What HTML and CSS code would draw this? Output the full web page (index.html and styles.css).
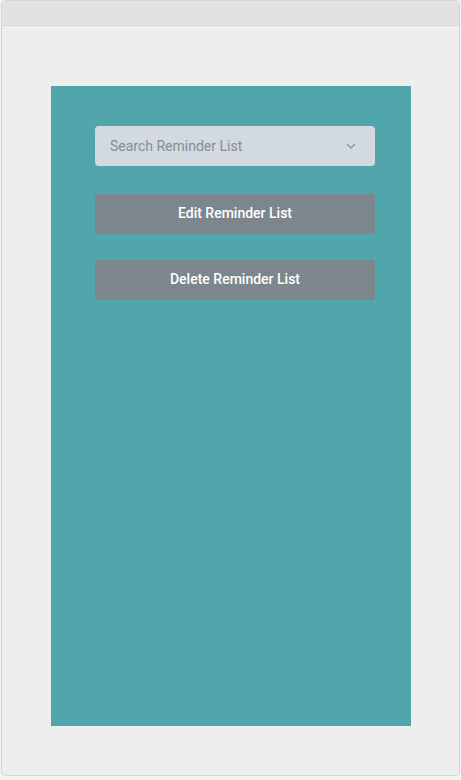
FILE: index.html
```html
<!DOCTYPE html>
<html>
<head>
<meta charset="utf-8">
<link rel="stylesheet" href="styles.css">
</head>
<body>
<div class="frame">
  <div class="topbar"></div>
  <div class="content">
    <div class="panel">
      <div class="select">
        <span class="placeholder">Search Reminder List</span>
        <svg class="chev" width="10" height="6" viewBox="0 0 10 6"><path d="M1 1l4 4 4-4" fill="none" stroke="#8a9499" stroke-width="1.3"/></svg>
      </div>
      <button class="btn">Edit Reminder List</button>
      <button class="btn">Delete Reminder List</button>
    </div>
  </div>
</div>
</body>
</html>
```
FILE: styles.css
```css
* { box-sizing: border-box; }
html, body { margin: 0; padding: 0; background: #f3f3f3; }
body { font-family: Roboto, "Noto Sans", sans-serif; }
.frame {
  margin-left: 1px;
  width: 459px;
  height: 776px;
  border: 1px solid #d6d6d6;
  border-radius: 5px;
  background: #eeeeee;
  overflow: hidden;
  display: flex;
  flex-direction: column;
}
.topbar {
  height: 25px;
  background: #e2e2e2;
  border-bottom: 1px solid #d6d6d6;
  flex: none;
}
.content {
  padding: 60px 0 0 49px;
}
.panel {
  width: 360px;
  height: 640px;
  background: #51a6ab;
  padding: 40px 36px 0 44px;
  display: flex;
  flex-direction: column;
}
.select {
  height: 40px;
  background: #d3d9e0;
  border-radius: 4px;
  display: flex;
  align-items: center;
  justify-content: space-between;
  padding: 0 19px 0 15px;
}
.placeholder {
  font-size: 14px;
  color: #848d93;
}
.btn {
  height: 40px;
  border: none;
  border-radius: 2px;
  background: #7b878c;
  color: #ffffff;
  font-family: Roboto, "Noto Sans", sans-serif;
  font-size: 14px;
  font-weight: 500;
  padding: 0 0 2px 0;
  margin-top: 28px;
}
.btn + .btn { margin-top: 26px; }
```
